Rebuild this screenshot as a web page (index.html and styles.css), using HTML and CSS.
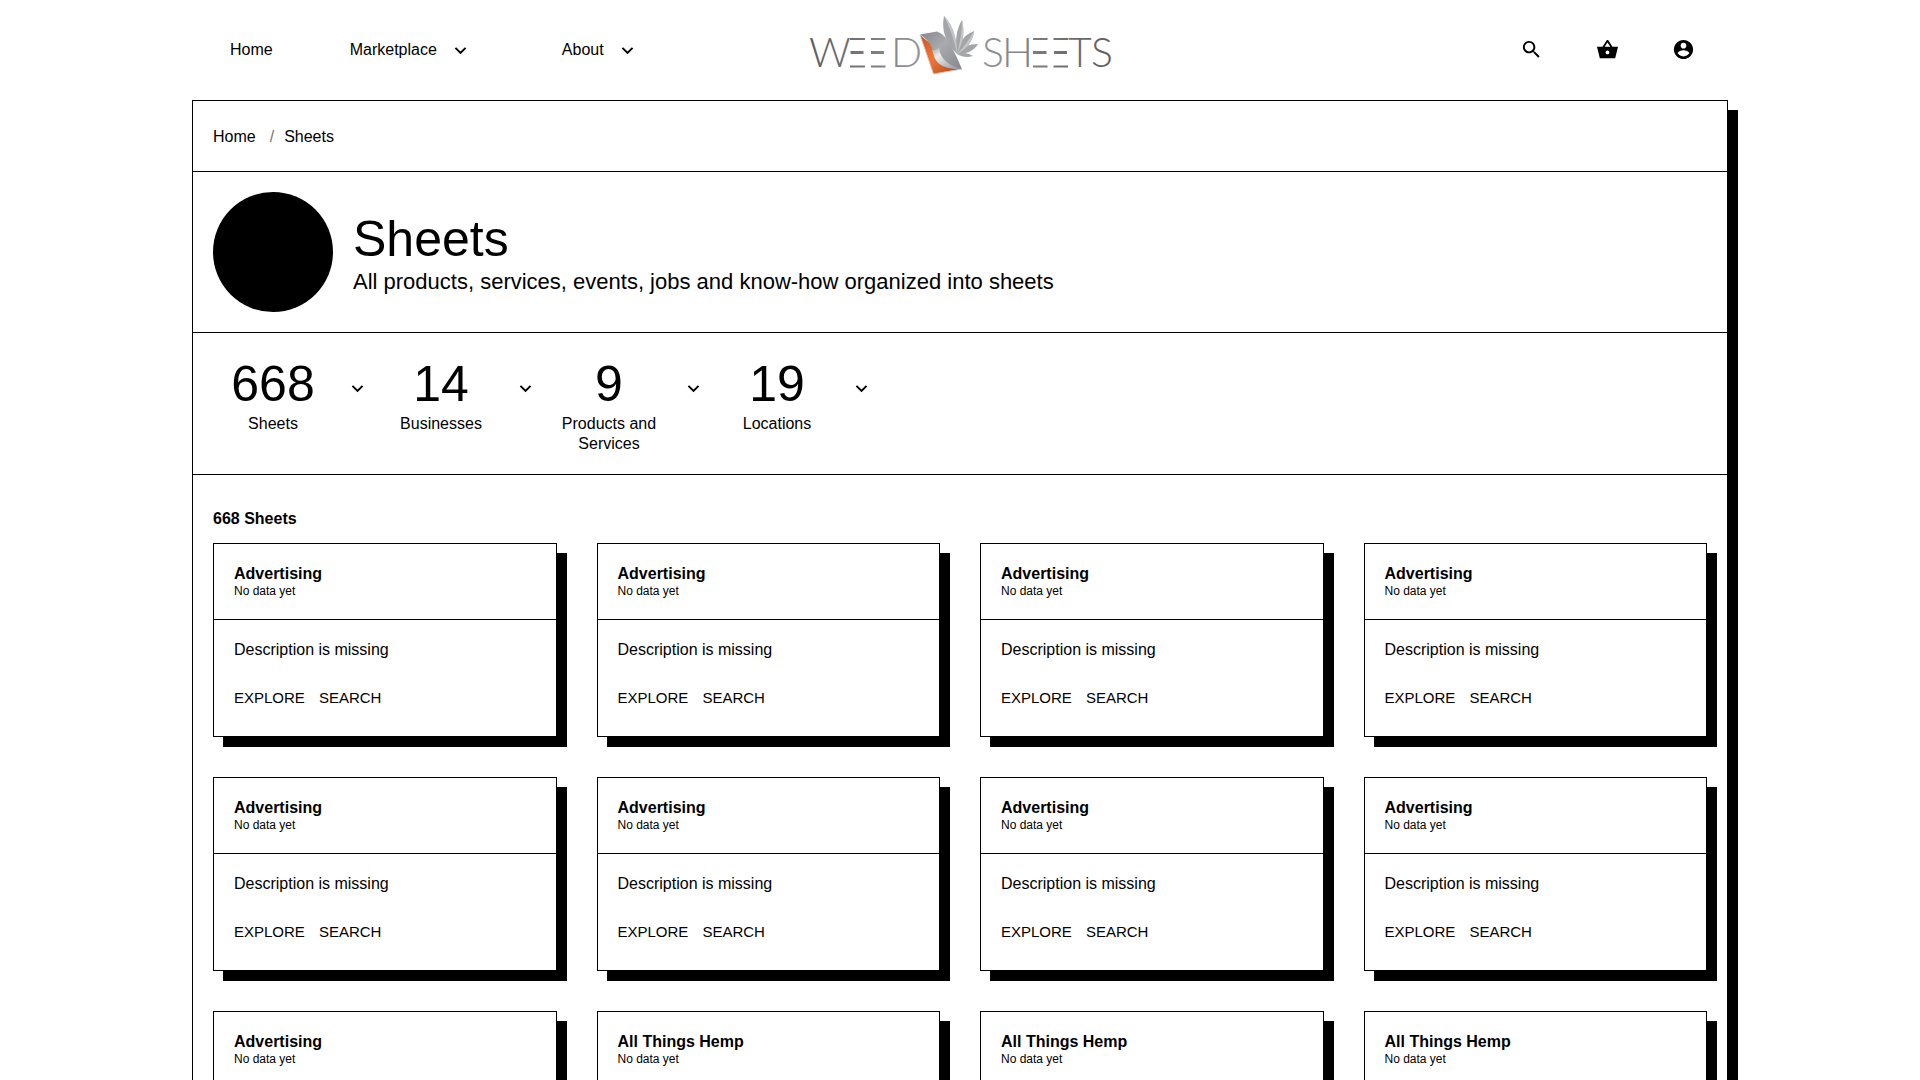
FILE: index.html
```html
<!DOCTYPE html>
<html lang="en">
<head>
<meta charset="utf-8">
<meta name="viewport" content="width=device-width, initial-scale=1">
<title>Sheets - Weed Sheets</title>
<link rel="stylesheet" href="styles.css">
</head>
<body>
<svg class="sprite" aria-hidden="true">
  <symbol id="chevron" viewBox="0 0 24 24"><path d="M16.59 8.59 12 13.17 7.41 8.59 6 10l6 6 6-6z"/></symbol>
  <symbol id="search" viewBox="0 0 24 24"><path d="M15.5 14h-.79l-.28-.27C15.41 12.59 16 11.11 16 9.5 16 5.91 13.09 3 9.5 3S3 5.91 3 9.5 5.91 16 9.5 16c1.61 0 3.09-.59 4.23-1.57l.27.28v.79l5 4.99L20.49 19l-4.99-5zm-6 0C7.01 14 5 11.99 5 9.5S7.01 5 9.5 5 14 7.01 14 9.5 11.99 14 9.5 14z"/></symbol>
  <symbol id="basket" viewBox="0 0 24 24"><path d="M17.21 9l-4.38-6.56c-.19-.28-.51-.42-.83-.42-.32 0-.64.14-.83.43L6.79 9H1l3 12h16L23 9h-5.790zM9 9l3-4.400L15 9H9zm3 8c-1.100 0-2-.900-2-2s.900-2 2-2 2 .900 2 2-.900 2-2 2z"/></symbol>
  <symbol id="account" viewBox="0 0 24 24"><path d="M12 2C6.480 2 2 6.480 2 12s4.480 10 10 10 10-4.480 10-10S17.520 2 12 2zm0 3c1.660 0 3 1.340 3 3s-1.340 3-3 3-3-1.340-3-3 1.340-3 3-3zm0 14.200c-2.500 0-4.710-1.280-6-3.220.030-1.990 4-3.080 6-3.080 1.990 0 5.970 1.090 6 3.080-1.290 1.940-3.500 3.220-6 3.220z"/></symbol>
</svg>

<header class="header">
  <nav class="nav" aria-label="Main">
    <a href="#">Home</a>
    <div class="nav-group"><a href="#">Marketplace</a><button class="icon-button" type="button" aria-label="Open Marketplace menu"><svg class="icon"><use href="#chevron"/></svg></button></div>
    <div class="nav-group"><a href="#">About</a><button class="icon-button" type="button" aria-label="Open About menu"><svg class="icon"><use href="#chevron"/></svg></button></div>
  </nav>
  <a class="logo" href="#" aria-label="Weed Sheets">
    <svg width="320" height="100" viewBox="0 0 320 100">
      <defs>
        <linearGradient id="left" gradientUnits="userSpaceOnUse" x1="10" y1="0" x2="115" y2="0"><stop offset="0" stop-color="#5c5c5e"/><stop offset="1" stop-color="#929396"/></linearGradient>
        <linearGradient id="right" gradientUnits="userSpaceOnUse" x1="184" y1="0" x2="310" y2="0"><stop offset="0" stop-color="#929396"/><stop offset="1" stop-color="#5c5c5e"/></linearGradient>
        <linearGradient id="page" x1="0" y1="0" x2="1" y2="1"><stop offset="0" stop-color="#85878a"/><stop offset=".45" stop-color="#a9abae"/><stop offset="1" stop-color="#85878a"/></linearGradient>
        <linearGradient id="curl" x1="0" y1="0" x2="1" y2="1"><stop offset="0" stop-color="#a6a8ab"/><stop offset=".3" stop-color="#ececed"/><stop offset="1" stop-color="#8b8d90"/></linearGradient>
        <linearGradient id="under" x1="0" y1="0" x2="1" y2="1"><stop offset="0" stop-color="#c9541f"/><stop offset=".45" stop-color="#f37435"/><stop offset="1" stop-color="#a5471d"/></linearGradient>
      </defs>
      <text class="logo-text" y="67" x="9 91" fill="url(#left)">WD</text>
      <path class="stripes" stroke="url(#left)" d="M50 39h15M71 39h14.500M50 66.500h15M71 66.500h14.500"/>
      <path class="stripes-bold" stroke="url(#left)" d="M50.500 52.500h13M71 52.500h13"/>
      <text class="logo-text" y="67" x="182 202 268 291" fill="url(#right)">SHTS</text>
      <path class="stripes" stroke="url(#right)" d="M233 39h14.500M253.500 39H268M233 66.500h14.500M253.500 66.500H268"/>
      <path class="stripes-bold" stroke="url(#right)" d="M233 52.500h13.500M254 52.500h13"/>
      <g fill="#a3a5a8">
        <path d="M157 54C146 43 141 31 144 16c9 9 13 23 13 38z"/>
        <path d="M157 54c-2-13-1-24 5-34 3 12 1 23-5 34z"/>
        <path d="M157 54c2-12 7-19 17-23-1 10-7 18-17 23z"/>
        <path d="M157 54c5-7 12-10 21-10-4 7-12 10-21 10z"/>
        <path d="M157 54c6-2 11-1 16 2-6 2-11 1-16-2z"/>
      </g>
      <path fill="#c4c5c7" d="M144 16c5 10 10 22 13 38 0-15-4-29-13-38zM162 20c0 12-2 23-5 34 6-11 8-22 5-34zM174 31c-5 9-10 16-17 23 10-5 16-13 17-23z"/>
      <path fill="url(#under)" d="M120 35l13.500 39L162 69z"/>
      <path fill="url(#page)" d="M120 34.500 137 31.500c9 3 15 14 25 37.500-13 0-23-3-26-10-3-8-4-17-16-24.500z"/>
      <path fill="url(#curl)" d="M139 47.500c-1 2-4 3-7 2.500 2 5 2 8 5 11.500 4 5 13 8 25 7.500-12-3-22-9-23-21.500z"/>
      <path fill="none" stroke="#c9cacc" d="M120 35l13.500 39L162 69"/>
    </svg>
  </a>
  <div class="tools">
    <button class="icon-button" type="button" aria-label="Search"><svg class="icon"><use href="#search"/></svg></button>
    <button class="icon-button" type="button" aria-label="Basket"><svg class="icon"><use href="#basket"/></svg></button>
    <button class="icon-button" type="button" aria-label="Account"><svg class="icon"><use href="#account"/></svg></button>
  </div>
</header>

<main class="panel">
  <nav class="breadcrumb" aria-label="Breadcrumb">
    <a href="#">Home</a><span class="separator">/</span><a href="#">Sheets</a>
  </nav>

  <section class="intro">
    <div class="avatar"></div>
    <div class="intro-text">
      <h1 class="title">Sheets</h1>
      <p class="subtitle">All products, services, events, jobs and know-how organized into sheets</p>
    </div>
  </section>

  <section class="stats">
    <div class="stat"><div class="stat-text"><div class="stat-number">668</div><div>Sheets</div></div><button class="icon-button" type="button" aria-label="Show sheets"><svg class="icon"><use href="#chevron"/></svg></button></div>
    <div class="stat"><div class="stat-text"><div class="stat-number">14</div><div>Businesses</div></div><button class="icon-button" type="button" aria-label="Show businesses"><svg class="icon"><use href="#chevron"/></svg></button></div>
    <div class="stat"><div class="stat-text"><div class="stat-number">9</div><div>Products and Services</div></div><button class="icon-button" type="button" aria-label="Show products and services"><svg class="icon"><use href="#chevron"/></svg></button></div>
    <div class="stat"><div class="stat-text"><div class="stat-number">19</div><div>Locations</div></div><button class="icon-button" type="button" aria-label="Show locations"><svg class="icon"><use href="#chevron"/></svg></button></div>
  </section>

  <section class="listing">
    <h2 class="listing-title">668 Sheets</h2>
    <div class="cards">
      <article class="card"><header class="card-head"><h3>Advertising</h3><p>No data yet</p></header><div class="card-body"><p>Description is missing</p><div class="actions"><button type="button">EXPLORE</button><button type="button">SEARCH</button></div></div></article>
      <article class="card"><header class="card-head"><h3>Advertising</h3><p>No data yet</p></header><div class="card-body"><p>Description is missing</p><div class="actions"><button type="button">EXPLORE</button><button type="button">SEARCH</button></div></div></article>
      <article class="card"><header class="card-head"><h3>Advertising</h3><p>No data yet</p></header><div class="card-body"><p>Description is missing</p><div class="actions"><button type="button">EXPLORE</button><button type="button">SEARCH</button></div></div></article>
      <article class="card"><header class="card-head"><h3>Advertising</h3><p>No data yet</p></header><div class="card-body"><p>Description is missing</p><div class="actions"><button type="button">EXPLORE</button><button type="button">SEARCH</button></div></div></article>
      <article class="card"><header class="card-head"><h3>Advertising</h3><p>No data yet</p></header><div class="card-body"><p>Description is missing</p><div class="actions"><button type="button">EXPLORE</button><button type="button">SEARCH</button></div></div></article>
      <article class="card"><header class="card-head"><h3>Advertising</h3><p>No data yet</p></header><div class="card-body"><p>Description is missing</p><div class="actions"><button type="button">EXPLORE</button><button type="button">SEARCH</button></div></div></article>
      <article class="card"><header class="card-head"><h3>Advertising</h3><p>No data yet</p></header><div class="card-body"><p>Description is missing</p><div class="actions"><button type="button">EXPLORE</button><button type="button">SEARCH</button></div></div></article>
      <article class="card"><header class="card-head"><h3>Advertising</h3><p>No data yet</p></header><div class="card-body"><p>Description is missing</p><div class="actions"><button type="button">EXPLORE</button><button type="button">SEARCH</button></div></div></article>
      <article class="card"><header class="card-head"><h3>Advertising</h3><p>No data yet</p></header><div class="card-body"><p>Description is missing</p><div class="actions"><button type="button">EXPLORE</button><button type="button">SEARCH</button></div></div></article>
      <article class="card"><header class="card-head"><h3>All Things Hemp</h3><p>No data yet</p></header><div class="card-body"><p>Description is missing</p><div class="actions"><button type="button">EXPLORE</button><button type="button">SEARCH</button></div></div></article>
      <article class="card"><header class="card-head"><h3>All Things Hemp</h3><p>No data yet</p></header><div class="card-body"><p>Description is missing</p><div class="actions"><button type="button">EXPLORE</button><button type="button">SEARCH</button></div></div></article>
      <article class="card"><header class="card-head"><h3>All Things Hemp</h3><p>No data yet</p></header><div class="card-body"><p>Description is missing</p><div class="actions"><button type="button">EXPLORE</button><button type="button">SEARCH</button></div></div></article>
    </div>
  </section>
</main>
</body>
</html>
```
FILE: styles.css
```css
* {
  box-sizing: border-box;
  margin: 0;
}

body {
  padding: 0 10%;
  background: #fff;
  color: #000;
  font: 16px/20px Helvetica, "Liberation Sans", Arial, sans-serif;
}

a {
  color: inherit;
  text-decoration: none;
}

button {
  padding: 0;
  border: 0;
  background: none;
  color: inherit;
  font: inherit;
  cursor: pointer;
}

.sprite {
  display: none;
}

.icon {
  display: block;
  width: 23px;
  height: 23px;
  fill: currentColor;
}

.icon-button {
  display: flex;
  align-items: center;
  justify-content: center;
  width: 48px;
  height: 48px;
}

/* Top bar */
.header {
  display: grid;
  grid-template-columns: 1fr auto 1fr;
  align-items: center;
  min-height: 100px;
}

.nav {
  display: flex;
  align-items: center;
  gap: 77px;
  padding-left: 38px;
}

.nav-group {
  display: flex;
  align-items: center;
}

.logo svg {
  display: block;
}

.logo-text {
  font-family: Lato, "Liberation Sans", sans-serif;
  font-size: 41px;
  font-weight: 300;
}

.stripes {
  stroke-width: 2;
}

.stripes-bold {
  stroke-width: 3;
}

.tools {
  display: flex;
  justify-content: flex-end;
  gap: 28px;
  padding: 0 21px 2px 0;
}

/* Main panel */
.panel {
  border: 1px solid #000;
  box-shadow: 10px 10px 0 #000;
}

.breadcrumb {
  display: flex;
  padding: 26px 20px 24px;
  border-bottom: 1px solid #000;
}

.separator {
  margin: 0 10px 0 14px;
  color: #757575;
}

.intro {
  display: flex;
  align-items: center;
  gap: 20px;
  padding: 20px;
}

.intro-text {
  padding-top: 2px;
}

.avatar {
  width: 120px;
  height: 120px;
  border-radius: 50%;
  background: #000;
}

.title {
  font-size: 50px;
  font-weight: 400;
  line-height: 58px;
}

.subtitle {
  font-size: 22px;
  line-height: 28px;
}

.stats {
  display: flex;
  padding: 21px 20px 20px;
  border-top: 1px solid #000;
  border-bottom: 1px solid #000;
}

.stat {
  display: flex;
}

.stat .icon-button {
  height: 68px;
}

.stat-text {
  width: 120px;
  text-align: center;
}

.stat-number {
  font-size: 50px;
  line-height: 60px;
}

/* Cards */
.listing {
  padding: 34px 20px 40px;
}

.listing-title {
  margin-bottom: 14px;
  font-size: 16px;
}

.cards {
  display: grid;
  grid-template-columns: repeat(4, 1fr);
  gap: 40px;
}

.card {
  border: 1px solid #000;
  box-shadow: 10px 10px 0 #000;
}

.card-head {
  padding: 20px;
  border-bottom: 1px solid #000;
}

.card-head h3 {
  font-size: 16px;
}

.card-head p {
  font-size: 12px;
  line-height: 15px;
}

.card-body {
  padding: 20px;
}

.actions {
  display: flex;
  gap: 14px;
  margin-top: 20px;
}

.actions button {
  height: 36px;
  font-size: 15px;
}
```
